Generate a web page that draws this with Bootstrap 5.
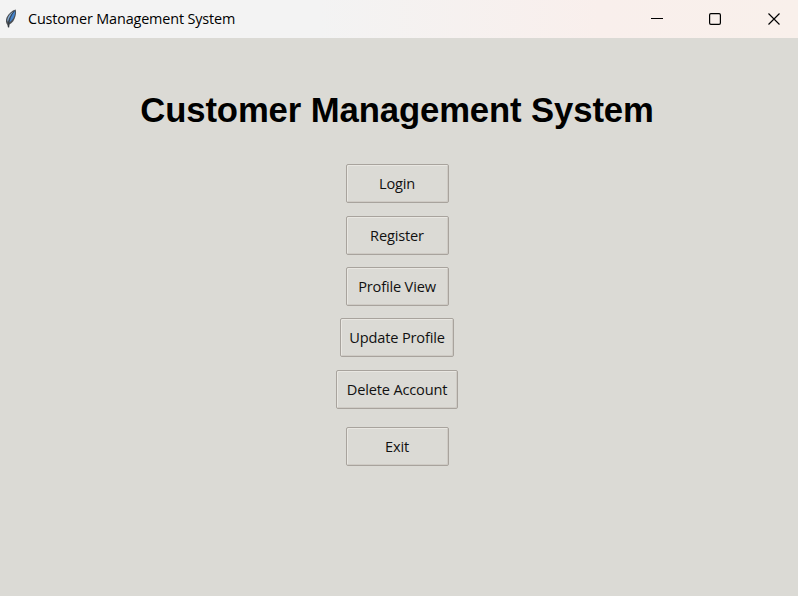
<!DOCTYPE html>
<html lang="en">
<head>
<meta charset="utf-8">
<title>Customer Management System</title>
<link href="https://cdn.jsdelivr.net/npm/bootstrap@5.3.0/dist/css/bootstrap.min.css" rel="stylesheet">
<style>
body{background:#dbdad5;color:#000;font-family:"Open Sans","Noto Sans",sans-serif;height:596px;overflow:hidden}
.titlebar{height:38px;background:linear-gradient(90deg,#f3f3f3 0,#f3f3f3 40%,#f9efec 75%,#f9f0eb 100%)}
.feather{width:14px;height:20px;margin-left:4px}
.caption{font-size:14.4px;line-height:20px;margin-left:10px;letter-spacing:-.14px}
.controls{gap:46px;margin-right:18px}
.close-mark{margin-left:1px}
.heading{font:bold 34.67px/42px "Liberation Sans",Arial,sans-serif;letter-spacing:-.1px;margin:51px 0 33.2px;padding-right:4px}
.stack{gap:12.4px;padding-right:4px}
.btn-clam{--bs-btn-border-radius:2px;width:103px;height:39px;padding:0 0 1px;font-size:14.6px;line-height:20px;letter-spacing:-.17px;color:#111;background:#dbdad5;border:1px solid #a8a39d;box-shadow:inset 1px 1px 0 #e9e7e2,inset -1px -1px 0 #cfcbc5;white-space:nowrap}
.btn-update{width:114px}
.btn-delete{width:122px}
.btn-exit{margin-top:6px}
</style>
<script src="https://cdn.jsdelivr.net/npm/bootstrap@5.3.0/dist/js/bootstrap.bundle.min.js"></script>
</head>
<body>
<header class="titlebar d-flex align-items-center">
<svg class="feather" viewBox="0 0 14 20"><path d="M11.700 .5C8 1.500 4.500 4.500 2.600 8.500C1.500 11 1.800 14 3.400 16L4 18.500L5.200 18.500L5.500 15.500C8.500 14 10.500 11 11.500 7C12.200 4.500 12.200 2.500 11.700 .5Z" fill="#4b4f54"/><path d="M11 1.500C8.500 3.500 6 8 5 13.500C7.700 12 9.500 9.500 10.500 6.500C11.200 4.500 11.300 3 11 1.500Z" fill="#4583cb"/><path d="M9.500 2.500C6.500 4 4 7 3.200 11L3.800 13C5 9 7 5.200 9.500 2.500Z" fill="#84aad3"/><path d="M10.500 2C7 5.500 4.800 11 4.400 18" fill="none" stroke="#26303a" stroke-width=".7"/></svg>
<span class="caption">Customer Management System</span>
<div class="controls d-flex align-items-center ms-auto">
<svg width="12" height="12" viewBox="0 0 12 12"><path d="M0 5.500H12" stroke="#000"/></svg>
<svg width="12" height="12" viewBox="0 0 12 12"><rect x=".6" y=".6" width="10.800" height="10.800" rx="1.300" fill="none" stroke="#000" stroke-width="1.200"/></svg>
<svg class="close-mark" width="12" height="12" viewBox="0 0 12 12"><path d="M.5 .5L11.500 11.500M11.500 .5L.5 11.500" stroke="#000" stroke-width="1.150"/></svg>
</div>
</header>
<main>
<h1 class="heading text-center">Customer Management System</h1>
<div class="stack d-flex flex-column align-items-center">
<button class="btn btn-clam" type="button">Login</button>
<button class="btn btn-clam" type="button">Register</button>
<button class="btn btn-clam" type="button">Profile View</button>
<button class="btn btn-clam btn-update" type="button">Update Profile</button>
<button class="btn btn-clam btn-delete" type="button">Delete Account</button>
<button class="btn btn-clam btn-exit" type="button">Exit</button>
</div>
</main>
</body>
</html>
